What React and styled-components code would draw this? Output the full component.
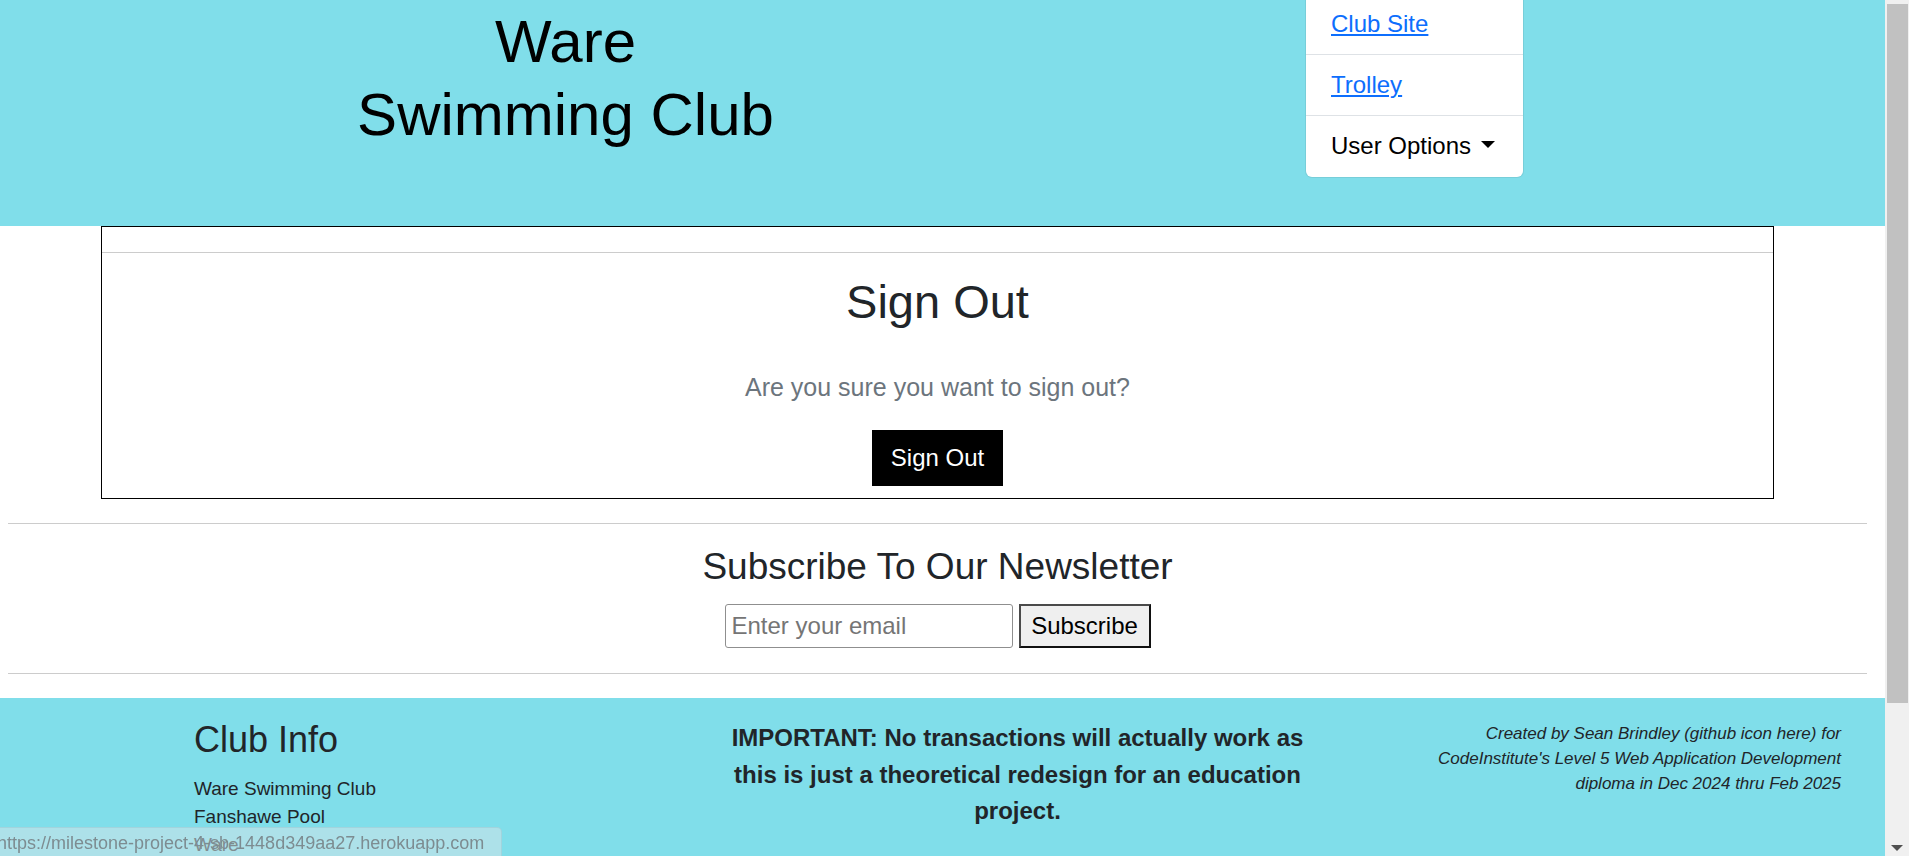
import React from 'react';
import styled, { createGlobalStyle } from 'styled-components';

const GlobalStyle = createGlobalStyle`
  html, body {
    margin: 0;
    padding: 0;
    height: 100%;
    overflow: hidden;
  }

  body {
    font-family: "Liberation Sans", Arial, sans-serif;
    color: #212529;
    background: #fff;
  }

  #root {
    height: 100%;
  }
`;

const Viewport = styled.div`
  display: flex;
  height: 100vh;
  overflow: hidden;
`;

const Page = styled.div`
  flex: 1;
  min-width: 0;
  overflow: hidden;
`;

// header

const Header = styled.header`
  display: flex;
  align-items: flex-start;
  height: 226px;
  background: #80deea;
`;

const Brand = styled.h1`
  width: 60%;
  margin: 0;
  padding-top: 5px;
  text-align: center;
  font-size: 60px;
  line-height: 73px;
  font-weight: 400;
  color: #000;
`;

const NavBox = styled.ul`
  list-style: none;
  margin: -6px 0 0 175px;
  padding: 0 0 1px;
  width: 217px;
  background: #fff;
  border-radius: 0 0 6px 6px;
  box-shadow: 0 0 0 1px rgba(0, 0, 0, 0.07);
`;

const NavItem = styled.li`
  padding: 12px 25px;
  font-size: 24px;
  line-height: 36px;
  color: #000;

  & + & {
    border-top: 1px solid #dee2e6;
  }
`;

const NavLink = styled.a`
  color: #0d6efd;
  text-decoration: underline;
`;

const Caret = styled.span`
  display: inline-block;
  margin-left: 10px;
  vertical-align: 6px;
  border-top: 7px solid #000;
  border-left: 7px solid transparent;
  border-right: 7px solid transparent;
`;

// main

const Main = styled.main`
  margin: 0 18px 0 8px;
`;

const Card = styled.section`
  margin: 0 93px;
  border: 1px solid #000;
`;

const CardHeader = styled.div`
  height: 25px;
  border-bottom: 1px solid #ccc;
`;

const CardBody = styled.div`
  padding: 21px 16px 12px;
  text-align: center;
`;

const CardTitle = styled.h2`
  margin: 0 0 39px;
  font-size: 47px;
  line-height: 56px;
  font-weight: 400;
  color: #212529;
`;

const Lead = styled.p`
  margin: 0 0 25px;
  font-size: 25px;
  line-height: 36px;
  color: #6c757d;
`;

const DarkButton = styled.button`
  display: inline-block;
  padding: 10px 19px;
  border: 0;
  background: #000;
  color: #fff;
  font-family: inherit;
  font-size: 24px;
  line-height: 36px;
  cursor: pointer;
`;

const Rule = styled.hr`
  margin: ${p => p.$top}px 0 0;
  border: 0;
  border-top: 1px solid #ccc;
`;

const Newsletter = styled.section`
  text-align: center;
`;

const NewsTitle = styled.h3`
  margin: 21px 0 15px;
  font-size: 37px;
  line-height: 44px;
  font-weight: 400;
  color: #212529;
`;

const SubscribeForm = styled.form`
  display: flex;
  justify-content: center;
  gap: 6px;
`;

const EmailInput = styled.input`
  box-sizing: border-box;
  width: 288px;
  height: 44px;
  padding: 0 6px;
  border: 1px solid #8f8f8f;
  border-radius: 3px;
  font-family: inherit;
  font-size: 24px;
  color: #212529;

  &::placeholder {
    color: #757575;
  }
`;

const SubscribeButton = styled.button`
  box-sizing: border-box;
  width: 132px;
  height: 44px;
  padding: 0;
  border: 2px solid;
  border-color: #4a4a4a #111 #111 #4a4a4a;
  background: #efefef;
  color: #000;
  font-family: inherit;
  font-size: 24px;
`;

// footer

const Footer = styled.footer`
  display: grid;
  grid-template-columns: 1fr 600px 1fr;
  margin-top: 24px;
  padding: 20px 44px 120px 194px;
  background: #80deea;
  color: #212529;
`;

const FooterHeading = styled.h4`
  margin: 0 0 14px;
  font-size: 36px;
  line-height: 43px;
  font-weight: 400;
`;

const FooterLine = styled.div`
  font-size: 19px;
  line-height: 28px;
`;

const Notice = styled.p`
  margin: 2px 0 0;
  text-align: center;
  font-size: 24px;
  line-height: 36.6px;
  font-weight: 700;
`;

const Credit = styled.p`
  margin: 3px 0 0;
  text-align: right;
  font-size: 17px;
  line-height: 25px;
  font-style: italic;
`;

// browser bits

const StatusBubble = styled.div`
  position: fixed;
  left: 0;
  bottom: 0;
  box-sizing: border-box;
  width: 502px;
  height: 29px;
  padding: 3px 0 0;
  text-indent: -3px;
  background: rgba(210, 228, 232, 0.55);
  border: 1px solid rgba(150, 200, 210, 0.5);
  border-left: 0;
  border-bottom: 0;
  border-top-right-radius: 5px;
  font-size: 18px;
  line-height: 25px;
  color: #7d8c91;
  white-space: nowrap;
  overflow: hidden;
`;

const ScrollTrack = styled.div`
  display: flex;
  flex-direction: column;
  width: 24px;
  background: #f0f0f0;
`;

const ScrollThumb = styled.div`
  height: 699px;
  margin: 4px 1px 0 2px;
  background: #c1c1c1;
`;

const ScrollArrow = styled.div`
  margin: auto auto 5px;
  border-top: 6px solid #505050;
  border-left: 6px solid transparent;
  border-right: 6px solid transparent;
`;

export default function App() {
  return (
    <>
      <GlobalStyle />
      <Viewport>
        <Page>
          <Header>
            <Brand>
              Ware
              <br />
              Swimming Club
            </Brand>
            <NavBox>
              <NavItem>
                <NavLink href="#">Club Site</NavLink>
              </NavItem>
              <NavItem>
                <NavLink href="#">Trolley</NavLink>
              </NavItem>
              <NavItem>
                User Options
                <Caret />
              </NavItem>
            </NavBox>
          </Header>

          <Main>
            <Card>
              <CardHeader />
              <CardBody>
                <CardTitle>Sign Out</CardTitle>
                <Lead>Are you sure you want to sign out?</Lead>
                <DarkButton type="button">Sign Out</DarkButton>
              </CardBody>
            </Card>

            <Rule $top={24} />

            <Newsletter>
              <NewsTitle>Subscribe To Our Newsletter</NewsTitle>
              <SubscribeForm onSubmit={e => e.preventDefault()}>
                <EmailInput type="email" placeholder="Enter your email" />
                <SubscribeButton type="submit">Subscribe</SubscribeButton>
              </SubscribeForm>
            </Newsletter>

            <Rule $top={25} />
          </Main>

          <Footer>
            <div>
              <FooterHeading>Club Info</FooterHeading>
              <FooterLine>Ware Swimming Club</FooterLine>
              <FooterLine>Fanshawe Pool</FooterLine>
              <FooterLine>Ware</FooterLine>
            </div>
            <Notice>
              IMPORTANT: No transactions will actually work as
              <br />
              this is just a theoretical redesign for an education
              <br />
              project.
            </Notice>
            <Credit>
              Created by Sean Brindley (github icon here) for
              <br />
              CodeInstitute's Level 5 Web Application Development
              <br />
              diploma in Dec 2024 thru Feb 2025
            </Credit>
          </Footer>

          <StatusBubble>https://milestone-project-4-sb-1448d349aa27.herokuapp.com</StatusBubble>
        </Page>

        <ScrollTrack>
          <ScrollThumb />
          <ScrollArrow />
        </ScrollTrack>
      </Viewport>
    </>
  );
}
